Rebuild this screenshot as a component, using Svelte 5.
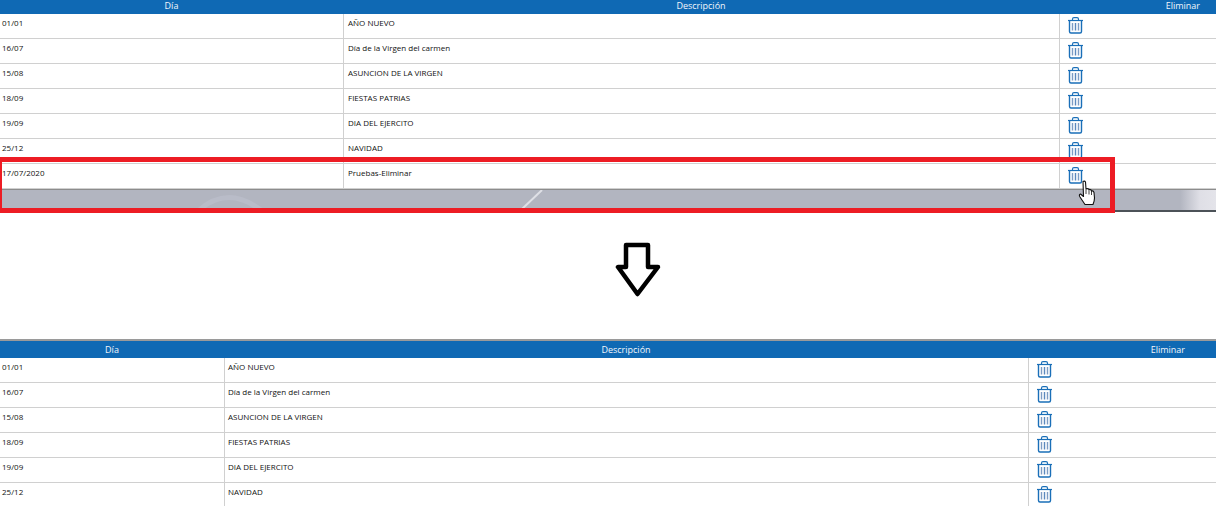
<script>
  const base = [
    ['01/01', 'AÑO NUEVO'],
    ['16/07', 'Día de la Virgen del carmen'],
    ['15/08', 'ASUNCION DE LA VIRGEN'],
    ['18/09', 'FIESTAS PATRIAS'],
    ['19/09', 'DIA DEL EJERCITO'],
    ['25/12', 'NAVIDAD']
  ];
  const before = [...base, ['17/07/2020', 'Pruebas-Eliminar']];
</script>

{#snippet trash()}
  <svg class="trash" width="17" height="17" viewBox="0 0 17 17" fill="none">
    <path d="M1 3.500H16" stroke="#1a6fb8" stroke-width="1.200" />
    <path d="M5.500 3.500V2.200Q5.500 .7 7 .7H10Q11.500 .7 11.500 2.200V3.500" stroke="#1a6fb8" stroke-width="1.200" />
    <path d="M2.500 3.500V14.500Q2.500 16 4 16H13Q14.500 16 14.500 14.500V3.500" stroke="#1a6fb8" stroke-width="1.400" />
    <path d="M5.500 6V13.500" stroke="#7d9cc4" stroke-width="1.400" />
    <path d="M8.500 6V13.500" stroke="#5c89bd" stroke-width="1.400" />
    <path d="M11.500 6V13.500" stroke="#7d9cc4" stroke-width="1.400" />
  </svg>
{/snippet}

{#snippet grid(rows, cls)}
  <div class="grid {cls}">
    <div class="head">Día</div>
    <div class="head">Descripción</div>
    <div class="head last">Eliminar</div>
    {#each rows as r}
      <div class="cell">{r[0]}</div>
      <div class="cell sep">{r[1]}</div>
      <div class="cell sep ic">{@render trash()}</div>
    {/each}
  </div>
{/snippet}

<div class="page">
  {@render grid(before, 'one')}

  <div class="band">
    <svg class="deco" width="1216" height="21" viewBox="0 0 1216 21" fill="none">
      <path d="M198 21Q228 -6 262 21" stroke="#b9bcc8" stroke-width="5" />
      <path d="M522 19L542 0" stroke="#dfe0e6" stroke-width="2" />
    </svg>
  </div>

  <div class="arrowbox">
    <svg width="46" height="56" viewBox="0 0 46 56" fill="#fff">
      <path d="M11 3H33V25H43L22.500 52L3 25H11Z" stroke="#000" stroke-width="4.500" stroke-linejoin="round" />
    </svg>
  </div>

  {@render grid(base, 'two')}

  <div class="mark"></div>
  <svg class="hand" width="18" height="26" viewBox="0 0 18 26">
    <path d="M5 1.500Q6.500 .500 7.500 2L8 9Q10 8 11 9.500Q13 9 13.500 11Q15.500 10.500 16 12.500L16.500 18Q16.500 21 15 24.500H7L2 17Q.5 14.500 2.500 14L5.500 16.500Z" fill="#fff" stroke="#111" stroke-width="1.100" stroke-linejoin="round" />
    <path d="M8 9.500V14M11 9.500V14.500M13.500 11V15" stroke="#111" stroke-width=".8" fill="none" />
  </svg>
</div>

<style>
  :global(body) {
    margin: 0;
    background: #fff;
  }
  .page {
    position: relative;
    width: 1216px;
    height: 506px;
    overflow: hidden;
    font-family: "Open Sans", sans-serif;
    font-size: 8px;
    color: #111;
  }
  .grid {
    display: grid;
  }
  .one {
    grid-template-columns: 343px 716px 157px;
    grid-template-rows: 14px;
    grid-auto-rows: 25px;
  }
  .two {
    grid-template-columns: 224px 804px 188px;
    grid-template-rows: 17px;
    grid-auto-rows: 25px;
    border-top: 2px solid #9a9a9a;
  }
  .head {
    background: #0f69b4;
    color: #f2f6fb;
    font-size: 9px;
    text-align: center;
    line-height: 11px;
  }
  .two .head {
    line-height: 17px;
  }
  .one .last {
    text-align: right;
    padding-right: 16px;
  }
  .two .last {
    text-align: right;
    padding-right: 31px;
  }
  .cell {
    box-sizing: border-box;
    border-bottom: 1px solid #d0d0d0;
    padding: 3px 0 0 2px;
    line-height: 12px;
  }
  .sep {
    border-left: 1px solid #d0d0d0;
    padding-left: 3px;
  }
  .one .sep {
    padding-left: 4px;
  }
  .ic,
  .one .ic {
    padding: 3px 0 0 7px;
  }
  .trash {
    display: block;
  }
  .band {
    position: relative;
    height: 23px;
    box-sizing: border-box;
    border-top: 1px solid #8c8c8c;
    border-bottom: 2px solid #4c5258;
    background: linear-gradient(90deg, #b2b5c0 0, #b2b5c0 1180px, #dfdfe6 1200px, #e4e4ea 1216px);
    overflow: hidden;
  }
  .deco {
    position: absolute;
    left: 0;
    top: 0;
  }
  .arrowbox {
    height: 127px;
    box-sizing: border-box;
    padding: 30px 0 0 615px;
  }
  .arrowbox svg {
    display: block;
  }
  .mark {
    position: absolute;
    left: 0;
    top: 157px;
    width: 1115px;
    height: 56px;
    box-sizing: border-box;
    border: solid #ed1c24;
    border-width: 5px 5px 5px 2px;
  }
  .hand {
    position: absolute;
    left: 1078px;
    top: 180px;
  }
</style>
